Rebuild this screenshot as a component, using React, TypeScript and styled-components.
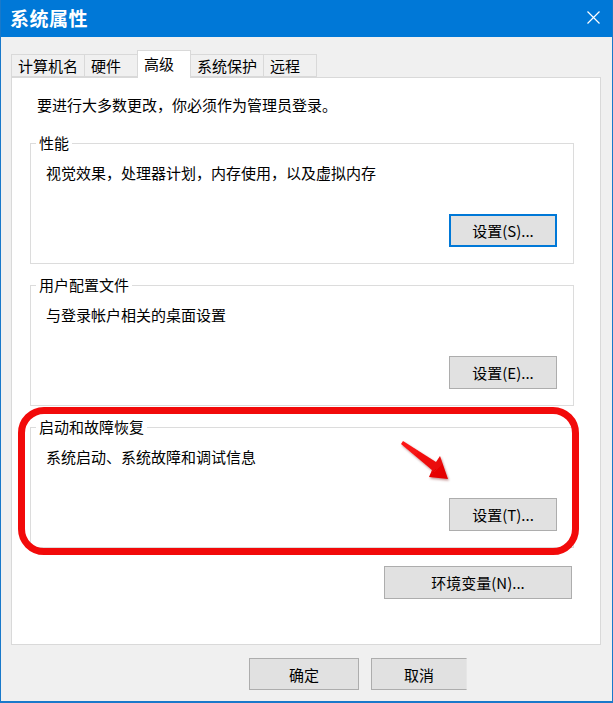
import React from "react";
import styled, { createGlobalStyle } from "styled-components";

const GlobalStyle = createGlobalStyle`
  html, body { margin: 0; padding: 0; background: #ffffff; }
  body { font-family: "Noto Sans CJK SC", "Noto Sans", sans-serif; }
  * { box-sizing: border-box; }
`;

const Window = styled.div`
  position: relative;
  width: 613px;
  height: 703px;
  background: #f0f0f0;
  border: 1px solid #1979ca;
  border-top: none;
  border-bottom-width: 2px;
  display: flex;
  flex-direction: column;
  overflow: hidden;
`;

const TitleBar = styled.div`
  height: 37px;
  flex: none;
  background: #0078d7;
  color: #ffffff;
  display: flex;
  align-items: center;
  justify-content: space-between;
  padding: 0 12px 2px 9px;
`;

const Title = styled.span`
  font-size: 19px;
  font-weight: 700;
  letter-spacing: 0.5px;
`;

const CloseIcon = styled.svg`
  width: 13px;
  height: 13px;
  display: block;
`;

const Body = styled.div`
  flex: 1;
  display: flex;
  flex-direction: column;
  padding: 13px 11px 0 10px;
`;

const TabRow = styled.div`
  display: flex;
  align-items: flex-end;
  height: 28px;
  margin-bottom: -1px;
  position: relative;
  z-index: 1;
`;

const Tab = styled.div<{ $active?: boolean }>`
  min-width: 54px;
  padding: 0 6px ${(p) => (p.$active ? "3px" : "0")};
  height: ${(p) => (p.$active ? "28px" : "23px")};
  margin-bottom: ${(p) => (p.$active ? "0" : "1px")};
  margin-left: -1px;
  display: flex;
  align-items: center;
  font-size: 15px;
  color: #000;
  background: ${(p) => (p.$active ? "#ffffff" : "#f0f0f0")};
  border: 1px solid #d9d9d9;
  border-bottom: ${(p) => (p.$active ? "none" : "1px solid #d9d9d9")};
  white-space: nowrap;
  &:first-child { margin-left: 0; }
`;

const Panel = styled.div`
  height: 568px;
  flex: none;
  background: #ffffff;
  border: 1px solid #d9d9d9;
  padding: 17px 26px 0 18px;
  display: flex;
  flex-direction: column;
`;

const Intro = styled.p`
  margin: 0 0 19px 7px;
  font-size: 15px;
  line-height: 20px;
  color: #000;
`;

const Groups = styled.div`
  display: flex;
  flex-direction: column;
  gap: 12px;
`;

const Group = styled.fieldset`
  margin: 0;
  padding: 0 16px 16px 5px;
  border: 1px solid #dcdcdc;
  min-width: 0;
`;

const Legend = styled.legend`
  padding: 0 3px;
  font-size: 15px;
  line-height: 18px;
  color: #000;
`;

const Description = styled.div`
  margin: 11px 0 0 10px;
  font-size: 15px;
  line-height: 20px;
  color: #000;
`;

const Actions = styled.div<{ $top?: number }>`
  display: flex;
  justify-content: flex-end;
  margin-top: ${(p) => p.$top ?? 31}px;
`;

const Button = styled.button<{ $width: number; $height?: number; $default?: boolean; $faded?: boolean }>`
  width: ${(p) => p.$width}px;
  height: ${(p) => p.$height ?? 33}px;
  padding: 0;
  font-family: inherit;
  font-size: 15px;
  color: #000;
  background: #e1e1e1;
  border: ${(p) => (p.$default ? "2px solid #0078d7" : "1px solid #adadad")};
  border-right-color: ${(p) => (p.$faded ? "#e6e6e6" : p.$default ? "#0078d7" : "#adadad")};
  display: flex;
  align-items: center;
  justify-content: center;
  line-height: 1;
`;

const EnvRow = styled.div`
  display: flex;
  justify-content: flex-end;
  margin-top: 18px;
  padding-right: 2px;
`;

const Footer = styled.div`
  display: flex;
  justify-content: flex-end;
  gap: 12px;
  padding: 13px 134px 0 0;
`;

const RedFrame = styled.div`
  position: absolute;
  left: 17px;
  top: 407px;
  width: 561px;
  height: 148px;
  border: 7px solid #f20a0a;
  border-radius: 26px;
  pointer-events: none;
`;

const Arrow = styled.svg`
  position: absolute;
  left: 389px;
  top: 430px;
  width: 70px;
  height: 60px;
  overflow: visible;
  pointer-events: none;
`;

export default function App() {
  return (
    <>
      <GlobalStyle />
      <Window>
        <TitleBar>
          <Title>系统属性</Title>
          <CloseIcon viewBox="0 0 13 13">
            <path d="M0.5 0.5 L12.5 12.5 M12.5 0.5 L0.5 12.5" stroke="#ffffff" strokeWidth="1.2" fill="none" />
          </CloseIcon>
        </TitleBar>
        <Body>
          <TabRow>
            <Tab>计算机名</Tab>
            <Tab>硬件</Tab>
            <Tab $active>高级</Tab>
            <Tab>系统保护</Tab>
            <Tab>远程</Tab>
          </TabRow>
          <Panel>
            <Intro>要进行大多数更改，你必须作为管理员登录。</Intro>
            <Groups>
              <Group>
                <Legend>性能</Legend>
                <Description>视觉效果，处理器计划，内存使用，以及虚拟内存</Description>
                <Actions>
                  <Button $width={108} $default>设置(S)...</Button>
                </Actions>
              </Group>
              <Group>
                <Legend>用户配置文件</Legend>
                <Description>与登录帐户相关的桌面设置</Description>
                <Actions>
                  <Button $width={108}>设置(E)...</Button>
                </Actions>
              </Group>
              <Group>
                <Legend>启动和故障恢复</Legend>
                <Description>系统启动、系统故障和调试信息</Description>
                <Actions>
                  <Button $width={108}>设置(T)...</Button>
                </Actions>
              </Group>
            </Groups>
            <EnvRow>
              <Button $width={188}>环境变量(N)...</Button>
            </EnvRow>
          </Panel>
          <Footer>
            <Button $width={110} $height={32}>确定</Button>
            <Button $width={96} $height={32} $faded>取消</Button>
          </Footer>
        </Body>
        <RedFrame />
        <Arrow viewBox="0 0 70 60">
          <defs>
            <linearGradient id="arrowFill" x1="0" y1="0" x2="1" y2="1">
              <stop offset="0" stopColor="#ff1a1a" />
              <stop offset="1" stopColor="#e00000" />
            </linearGradient>
            <filter id="arrowShadow" x="-20%" y="-20%" width="150%" height="150%">
              <feDropShadow dx="1" dy="1.5" stdDeviation="1.2" floodColor="#700000" floodOpacity="0.45" />
            </filter>
          </defs>
          <polygon
            points="13,11 46,32 50,26 58,49 39,47 42,40 11,14"
            fill="url(#arrowFill)"
            filter="url(#arrowShadow)"
          />
        </Arrow>
      </Window>
    </>
  );
}
